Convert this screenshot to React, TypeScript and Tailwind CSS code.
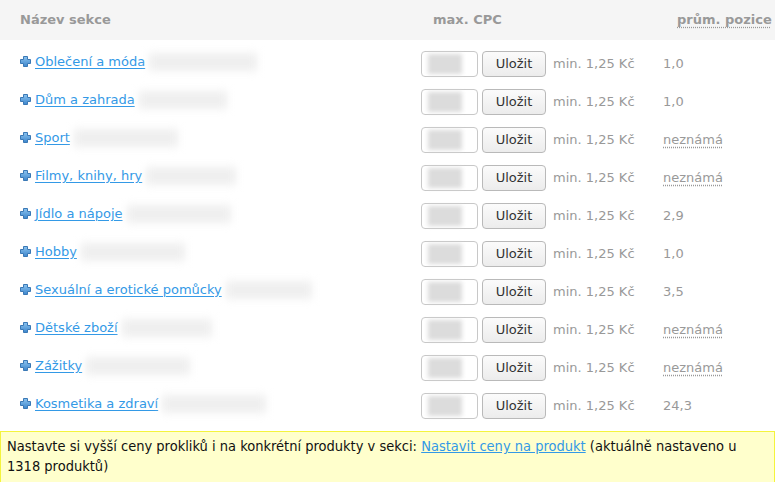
import React from 'react';

// Section rows – blur widths imitate the hidden counts after each name
const sections = [
  { name: 'Oblečení a móda', blur: 108, pos: '1,0' },
  { name: 'Dům a zahrada', blur: 88, pos: '1,0' },
  { name: 'Sport', blur: 104, pos: 'neznámá' },
  { name: 'Filmy, knihy, hry', blur: 90, pos: 'neznámá' },
  { name: 'Jídlo a nápoje', blur: 104, pos: '2,9' },
  { name: 'Hobby', blur: 104, pos: '1,0' },
  { name: 'Sexuální a erotické pomůcky', blur: 86, pos: '3,5' },
  { name: 'Dětské zboží', blur: 90, pos: 'neznámá' },
  { name: 'Zážitky', blur: 104, pos: 'neznámá' },
  { name: 'Kosmetika a zdraví', blur: 104, pos: '24,3' },
];

function PlusIcon() {
  return (
    <svg width="11" height="11" viewBox="0 0 11 11" className="shrink-0">
      <defs>
        <linearGradient id="pg" x1="0" y1="0" x2="0" y2="1">
          <stop offset="0" stopColor="#8cc4f0" />
          <stop offset="1" stopColor="#3d86cc" />
        </linearGradient>
      </defs>
      <path
        d="M3.5 0.5h4v3h3v4h-3v3h-4v-3h-3v-4h3z"
        fill="url(#pg)"
        stroke="#3a78b5"
        strokeWidth="1"
        strokeLinejoin="round"
      />
    </svg>
  );
}

export default function App() {
  return (
    <div
      className="w-[775px] h-[482px] bg-white overflow-hidden text-[13px]"
      style={{ fontFamily: '"DejaVu Sans", Verdana, sans-serif' }}
    >
      {/* Header */}
      <div className="h-[40px] bg-[#f5f5f5] flex items-center font-bold text-[#999]">
        <div className="w-[433px] pl-5">Název sekce</div>
        <div className="w-[244px]">max. CPC</div>
        <div className="underline decoration-dotted underline-offset-[3px]">prům. pozice</div>
      </div>

      {/* Rows */}
      <div className="pt-[5px]">
        {sections.map((s) => (
          <div key={s.name} className="h-[38px] flex items-center">
            <div className="w-[421px] pl-5 flex items-center gap-[4px] -mt-[5px]">
              <PlusIcon />
              <a href="#" className="text-[#3399e6] underline underline-offset-[2px]">
                {s.name}
              </a>
              <span
                className="inline-block h-[18px] bg-[#efefef] blur-[4px]"
                style={{ width: s.blur }}
              />
            </div>
            <div className="w-[57px] h-[26px] border border-[#c8c8c8] rounded-[4px] bg-white flex items-center pl-[6px]">
              <span className="inline-block w-[34px] h-[20px] bg-[#dcdcdc] blur-[2px]" />
            </div>
            <button className="ml-[4px] w-[64px] h-[26px] border border-[#b9b9b9] rounded-[4px] bg-gradient-to-b from-[#fbfbfb] to-[#ececec] text-[#333] text-[13px]">
              Uložit
            </button>
            <div className="ml-[7px] w-[110px] text-[#999]">min. 1,25 Kč</div>
            <div
              className={
                s.pos === 'neznámá'
                  ? 'text-[#999] underline decoration-dotted underline-offset-[3px]'
                  : 'text-[#999]'
              }
            >
              {s.pos}
            </div>
          </div>
        ))}
      </div>

      {/* Info box */}
      <div
        className="mt-[6px] h-[52px] border border-[#f4f43c] bg-[#ffffcc] pl-[6px] pr-[24px] pt-[4px] leading-[20px] text-[14.5px] text-[#111]"
        style={{ fontFamily: '"DejaVu Sans Condensed", "DejaVu Sans", sans-serif' }}
      >
        Nastavte si vyšší ceny prokliků i na konkrétní produkty v sekci:{' '}
        <a href="#" className="text-[#3399e6] underline">
          Nastavit ceny na produkt
        </a>{' '}
        (aktuálně nastaveno u 1318 produktů)
      </div>
    </div>
  );
}
